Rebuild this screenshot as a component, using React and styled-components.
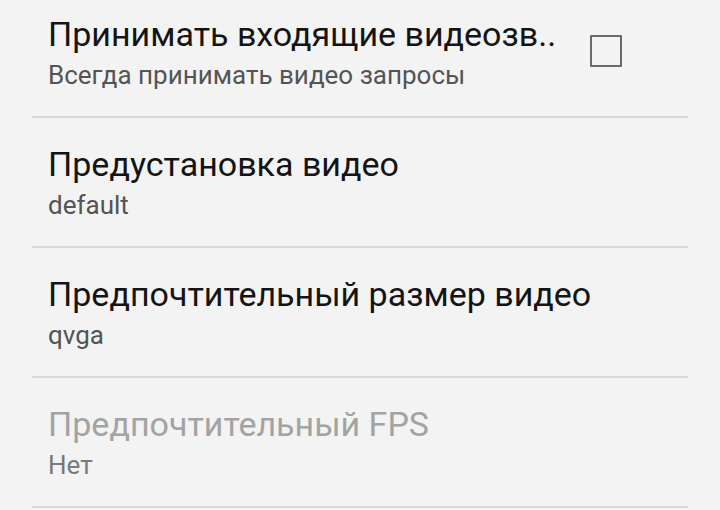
import React from 'react';
import styled, { createGlobalStyle } from 'styled-components';

const GlobalStyle = createGlobalStyle`
  html, body {
    margin: 0;
    padding: 0;
    background-color: #f3f3f3;
    overflow: hidden;
  }
  body {
    font-family: Roboto, "Noto Sans", sans-serif;
  }
`

const StyledScreen = styled.div`
  width: 720px;
  height: 510px;
  overflow: hidden;
  background-color: #f3f3f3;
`

const StyledList = styled.ul`
  list-style: none;
  margin: -12px 0 0 0;
  padding: 0 32px;
`

const StyledRow = styled.li`
  height: 130px;
  box-sizing: border-box;
  padding: 26px 16px 0 16px;
  border-bottom: 2px solid #d9d9d9;
  display: flex;
  align-items: flex-start;
  justify-content: space-between;
`

const StyledTexts = styled.div`
  display: flex;
  flex-direction: column;
  min-width: 0;
`

const StyledTitle = styled.div`
  font-size: 34px;
  line-height: 40px;
  color: ${({ disabled }) => (disabled ? '#a3a3a3' : '#141414')};
  white-space: nowrap;
`

const StyledSummary = styled.div`
  margin-top: 6px;
  font-size: 26px;
  line-height: 30px;
  color: ${({ disabled }) => (disabled ? '#7a7a7a' : '#545454')};
  white-space: nowrap;
`

const StyledCheckbox = styled.span`
  flex: none;
  width: 32px;
  height: 32px;
  box-sizing: border-box;
  margin: 21px 50px 0 0;
  border: 2px solid #6a6a6a;
  border-radius: 1px;
`

const prefs = [
  { title: 'Принимать входящие видеозв..', summary: 'Всегда принимать видео запросы', checkbox: true },
  { title: 'Предустановка видео', summary: 'default' },
  { title: 'Предпочтительный размер видео', summary: 'qvga' },
  { title: 'Предпочтительный FPS', summary: 'Нет', disabled: true },
];

export default function App() {
  return (
    <>
      <GlobalStyle />
      <StyledScreen>
        <StyledList>
          {prefs.map((p) => (
            <StyledRow key={p.title}>
              <StyledTexts>
                <StyledTitle disabled={p.disabled}>{p.title}</StyledTitle>
                <StyledSummary disabled={p.disabled}>{p.summary}</StyledSummary>
              </StyledTexts>
              {p.checkbox && <StyledCheckbox />}
            </StyledRow>
          ))}
        </StyledList>
      </StyledScreen>
    </>
  );
}
